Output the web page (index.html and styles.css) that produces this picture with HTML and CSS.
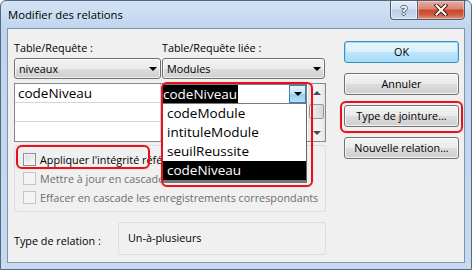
FILE: index.html
```html
<!DOCTYPE html>
<html lang="fr">
<head>
    <meta charset="UTF-8">
    <meta name="viewport" content="width=device-width, initial-scale=1.0">
    <title>Modifier des relations</title>
    <link rel="stylesheet" href="styles.css">
</head>
<body>

<div class="window">
    <div class="titlebar">
        <span class="title">Modifier des relations</span>
        <div class="caption">
            <span class="cap help">?</span>
            <span class="cap close">
                <svg width="14" height="12" viewBox="0 0 14 12">
                    <path d="M2.5 1.5 L11.5 10.5 M11.5 1.5 L2.5 10.5" stroke="#4a1d14" stroke-width="4" stroke-linecap="square"/>
                    <path d="M2.5 1.5 L11.5 10.5 M11.5 1.5 L2.5 10.5" stroke="#fff" stroke-width="2" stroke-linecap="square"/>
                </svg>
            </span>
        </div>
    </div>

    <div class="client">
        <div class="left">
            <div class="pair labels">
                <span>Table/Requête :</span>
                <span>Table/Requête liée :</span>
            </div>
            <div class="pair">
                <div class="combo">niveaux<span class="arrow"></span></div>
                <div class="combo">Modules<span class="arrow"></span></div>
            </div>

            <div class="fields">
                <div class="col">
                    <div class="cell">codeNiveau</div>
                    <div class="cell"></div>
                    <div class="cell"></div>
                </div>
                <div class="col">
                    <div class="cell">codeNiveau</div>
                    <div class="cell"></div>
                    <div class="cell"></div>
                </div>
                <div class="scrollbar">
                    <span class="sb-btn"><span class="tri up"></span></span>
                    <span class="thumb"></span>
                    <span class="sb-btn"><span class="tri down"></span></span>
                </div>
            </div>

            <!-- first two rows are cut by the open list -->
            <div class="group">
                <div class="check clip"><span class="box"></span>Appliquer l'intégrité référentielle</div>
                <div class="check clip disabled"><span class="box"></span>Mettre à jour en cascade les champs correspondants</div>
                <div class="check disabled"><span class="box"></span>Effacer en cascade les enregistrements correspondants</div>
            </div>

            <div class="relation">
                <span class="rel-label">Type de relation :</span>
                <div class="rel-box">Un-à-plusieurs</div>
            </div>
        </div>

        <div class="buttons">
            <div class="btn default">OK</div>
            <div class="btn">Annuler</div>
            <div class="btn">Type de jointure...</div>
            <div class="btn">Nouvelle relation...</div>
        </div>

        <!-- open combo of the linked field -->
        <div class="dropdown">
            <div class="drop-edit">
                <span class="sel">codeNiveau</span>
                <span class="drop-btn"><span class="tri down"></span></span>
            </div>
            <div class="drop-list">
                <div class="item">codeModule</div>
                <div class="item">intituleModule</div>
                <div class="item">seuilReussite</div>
                <div class="item active">codeNiveau</div>
            </div>
        </div>

        <span class="mark mark-drop"></span>
        <span class="mark mark-check"></span>
        <span class="mark mark-join"></span>
    </div>
</div>

</body>
</html>
```

FILE: styles.css
```css
* {
    box-sizing: border-box;
}
body {
    margin: 0;
    font-family: "Open Sans", "Noto Sans", sans-serif;
    font-size: 10.8px;
    color: #000;
    background: #fff;
}
.window {
    width: 472px;
    height: 270px;
    display: flex;
    flex-direction: column;
    padding: 0 6px 6px;
    border: 1px solid #55687f;
    border-radius: 6px 6px 0 0;
    background: linear-gradient(#d3e3f5, #bfd5ee 28px, #c6daf1);
}
.titlebar {
    height: 27px;
    flex-shrink: 0;
    display: flex;
    justify-content: space-between;
}
.title {
    padding: 6px 0 0 1px;
    font-size: 11.3px;
    line-height: 16px;
}
.caption {
    display: flex;
    height: 20px;
    margin-top: -1px;
}
.cap {
    display: flex;
    align-items: center;
    justify-content: center;
    height: 20px;
    border: 1px solid #4d5f77;
}
.help {
    width: 27px;
    border-right: 0;
    border-radius: 0 0 0 4px;
    background: linear-gradient(#e4edf8, #d2e0f1 45%, #bccfe6 50%, #cddcef);
    box-shadow: inset 0 0 0 1px rgba(255,255,255,0.5);
    color: #fff;
    font-size: 13px;
    font-weight: bold;
    text-shadow: 1px 0 #56667c, -1px 0 #56667c, 0 1px #56667c, 0 -1px #56667c;
}
.close {
    width: 48px;
    border-radius: 0 0 4px 0;
    background: linear-gradient(#e8ab9d, #d88671 45%, #c7452c 50%, #cf5a3f 75%, #e39676);
    box-shadow: inset 0 0 0 1px rgba(255,255,255,0.35);
}
.client {
    position: relative;
    flex: 1;
    display: flex;
    gap: 18px;
    padding: 13px 5px 0 6px;
    background: #f0f0f0;
    border: 1px solid #8194ab;
}
.left {
    width: 312px;
    display: flex;
    flex-direction: column;
}
.pair {
    display: grid;
    grid-template-columns: 147px 163px;
    gap: 1px;
}
.labels {
    line-height: 12px;
    margin-bottom: 4px;
}
.combo {
    position: relative;
    height: 21px;
    line-height: 19px;
    padding-left: 4px;
    border: 1px solid #707070;
    border-radius: 3px;
    background: linear-gradient(#f2f2f2, #ebebeb 50%, #dddddd 50%, #cfcfcf);
    box-shadow: inset 0 0 0 1px rgba(255,255,255,0.7);
}
.combo .arrow {
    position: absolute;
    right: 3px;
    top: 8px;
    border-left: 4px solid transparent;
    border-right: 4px solid transparent;
    border-top: 4px solid #000;
}
.fields {
    display: flex;
    height: 59px;
    margin-top: 4px;
    border: 1px solid #828790;
    background: #fff;
}
.col {
    width: 147px;
}
.col:first-child {
    width: 146px;
    border-right: 1px solid #d5d5d5;
}
.cell {
    height: 19px;
    line-height: 18px;
    padding-left: 3px;
    font-size: 13.5px;
    border-bottom: 1px solid #d5d5d5;
}
.cell:last-child {
    border-bottom: 0;
}
.scrollbar {
    width: 17px;
    display: flex;
    flex-direction: column;
    background: linear-gradient(90deg, #e3e3e3, #f2f2f2 30%, #f2f2f2 70%, #e3e3e3);
    border-left: 1px solid #e8e8e8;
}
.sb-btn {
    height: 17px;
    display: flex;
    align-items: center;
    justify-content: center;
}
.thumb {
    height: 15px;
    margin: 3px 1px auto 0;
    border: 1px solid #979797;
    border-radius: 2px;
    background: linear-gradient(90deg, #f3f3f3, #e4e4e4 50%, #d7d7d7);
}
.tri {
    border-left: 4px solid transparent;
    border-right: 4px solid transparent;
}
.tri.up {
    border-bottom: 4px solid #3f4d5c;
}
.tri.down {
    border-top: 4px solid #3f4d5c;
}
.group {
    height: 67px;
    margin-top: 3px;
    padding: 4px 8px;
    border: 1px solid #d5dfe5;
    border-radius: 3px;
}
.check {
    height: 19px;
    display: flex;
    align-items: center;
    white-space: nowrap;
}
.check.clip {
    width: 138px;
    overflow: hidden;
}
.box {
    width: 13px;
    height: 13px;
    margin-right: 4px;
    flex-shrink: 0;
    border: 1px solid #8e8f8f;
    background: linear-gradient(135deg, #dcdcdc, #fafafa);
    box-shadow: inset 0 0 0 1px #f4f4f4;
}
.disabled {
    color: #6d6d6d;
}
.disabled .box {
    border-color: #c5c5c5;
    background: #f4f4f4;
    box-shadow: none;
}
.relation {
    display: flex;
    align-items: center;
    margin-top: 10px;
}
.rel-label {
    width: 104px;
    padding-top: 3px;
}
.rel-box {
    width: 208px;
    height: 33px;
    line-height: 29px;
    padding-left: 9px;
    border: 1px solid #d5dfe5;
    border-radius: 3px;
}
.buttons {
    width: 115px;
    display: flex;
    flex-direction: column;
    gap: 10px;
    margin-top: -1px;
}
.btn {
    height: 22px;
    line-height: 20px;
    text-align: center;
    border: 1px solid #707070;
    border-radius: 3px;
    background: linear-gradient(#f2f2f2, #ebebeb 50%, #dddddd 50%, #cfcfcf);
    box-shadow: inset 0 0 0 1px rgba(255,255,255,0.75);
}
.btn.default {
    border-color: #3c8fc4;
    background: linear-gradient(#eaf6fd, #d9f0fc 50%, #bee6fd 50%, #a7d9f5);
    box-shadow: inset 0 0 0 1px #9fdcf8;
}
.dropdown {
    position: absolute;
    left: 154px;
    top: 55px;
    width: 145px;
    font-size: 13.5px;
}
.drop-edit {
    height: 20px;
    display: flex;
    border: 1px solid #7a7a7a;
    background: #fff;
}
.sel {
    background: #000;
    color: #fff;
    line-height: 18px;
    padding-right: 1px;
}
.drop-btn {
    width: 17px;
    margin-left: auto;
    display: flex;
    align-items: center;
    justify-content: center;
    border: 1px solid #3c7fb1;
    background: linear-gradient(#e5f4fc, #c4e5f6 50%, #98d1ef 50%, #b3e0f7);
}
.drop-btn .tri.down {
    border-top-color: #000;
}
.drop-list {
    border: 1px solid #646464;
    border-top: 0;
    border-bottom: 3px solid #767676;
    background: #fff;
}
.item {
    height: 19px;
    line-height: 19px;
    padding-left: 4px;
}
.item.active {
    background: #000;
    color: #fff;
}
.mark {
    position: absolute;
    border: 2px solid #e5121b;
    border-radius: 6px;
    box-shadow: 0 0 1px #f47a7e;
}
.mark-drop {
    left: 153px;
    top: 53px;
    width: 152px;
    height: 105px;
}
.mark-check {
    left: 8px;
    top: 116px;
    width: 134px;
    height: 24px;
}
.mark-join {
    left: 332px;
    top: 72px;
    width: 123px;
    height: 32px;
}
```
